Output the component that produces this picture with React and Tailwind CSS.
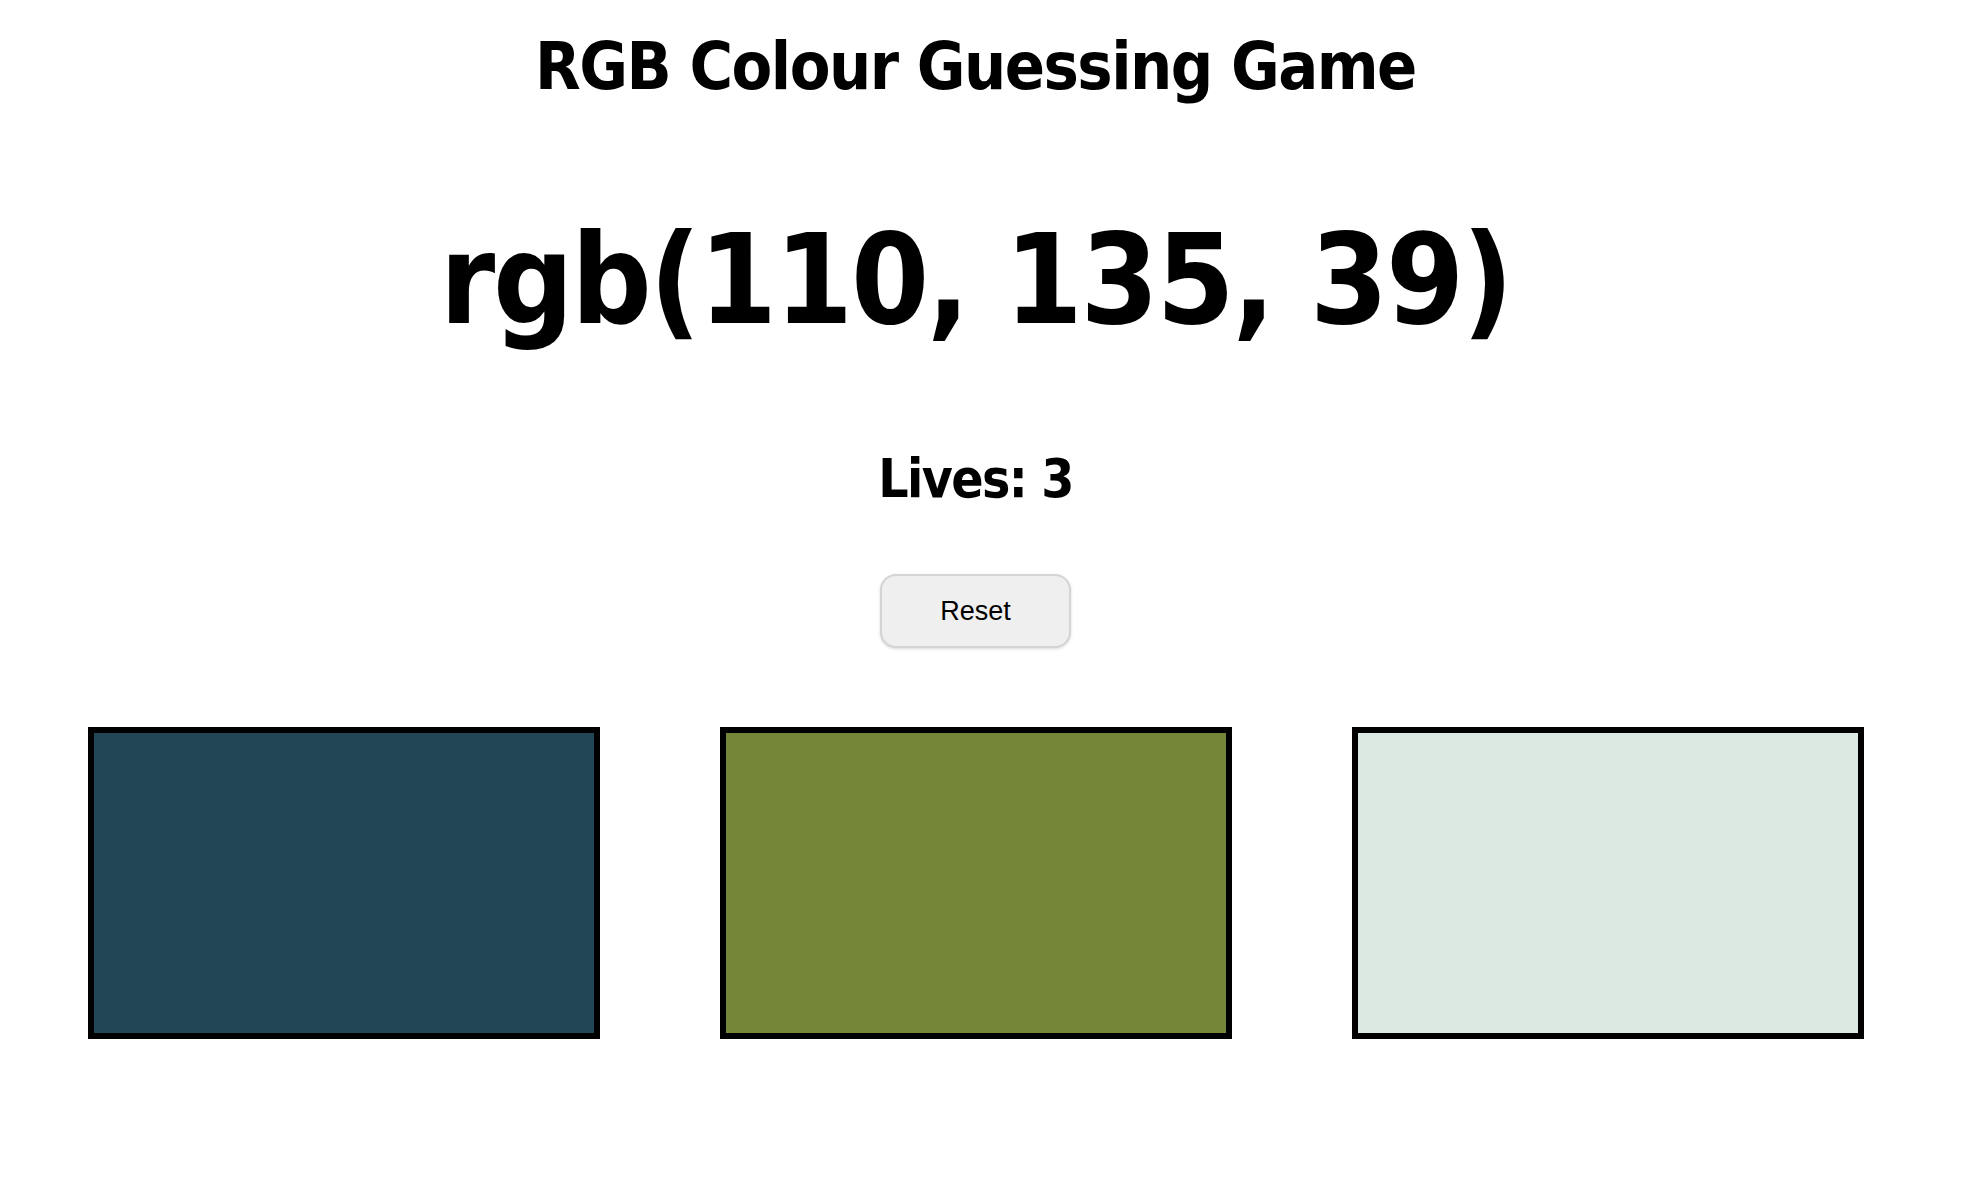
import React, { useState } from 'react';

const colours = ['#234656', '#748637', '#dce9e2'];

const App = () => {
    const [lives] = useState(3);

    return (
        <div className="min-h-screen bg-white flex flex-col items-center pt-[34px] pr-[11px] text-black font-['DejaVu_Sans_Condensed','DejaVu_Sans',sans-serif]">
            {/* Heading */}
            <h1 className="text-[66px] font-bold leading-none tracking-[-1.5px]">RGB Colour Guessing Game</h1>

            {/* Target colour */}
            <h2 className="mt-[117px] text-[125px] font-bold leading-none tracking-[-2.2px]">rgb(110, 135, 39)</h2>

            <h3 className="mt-[110px] text-[53px] font-bold leading-none tracking-[-1.6px]">Lives: {lives}</h3>

            <button className="mt-[69px] w-[191px] h-[74px] rounded-[16px] bg-[#efefef] border-2 border-[#d4d4d4] shadow-[0_1px_3px_rgba(0,0,0,0.15)] text-[27px] font-['Liberation_Sans',Arial,sans-serif] text-black">
                Reset
            </button>

            {/* Colour options */}
            <div className="self-stretch mt-[79px] flex gap-[120px] pl-[88px]">
                {colours.map((c, i) => (
                    <div
                        key={i}
                        className="w-[512px] h-[312px] border-[6px] border-black cursor-pointer"
                        style={{ backgroundColor: c }}
                    />
                ))}
            </div>
        </div>
    );
};

export default App;
